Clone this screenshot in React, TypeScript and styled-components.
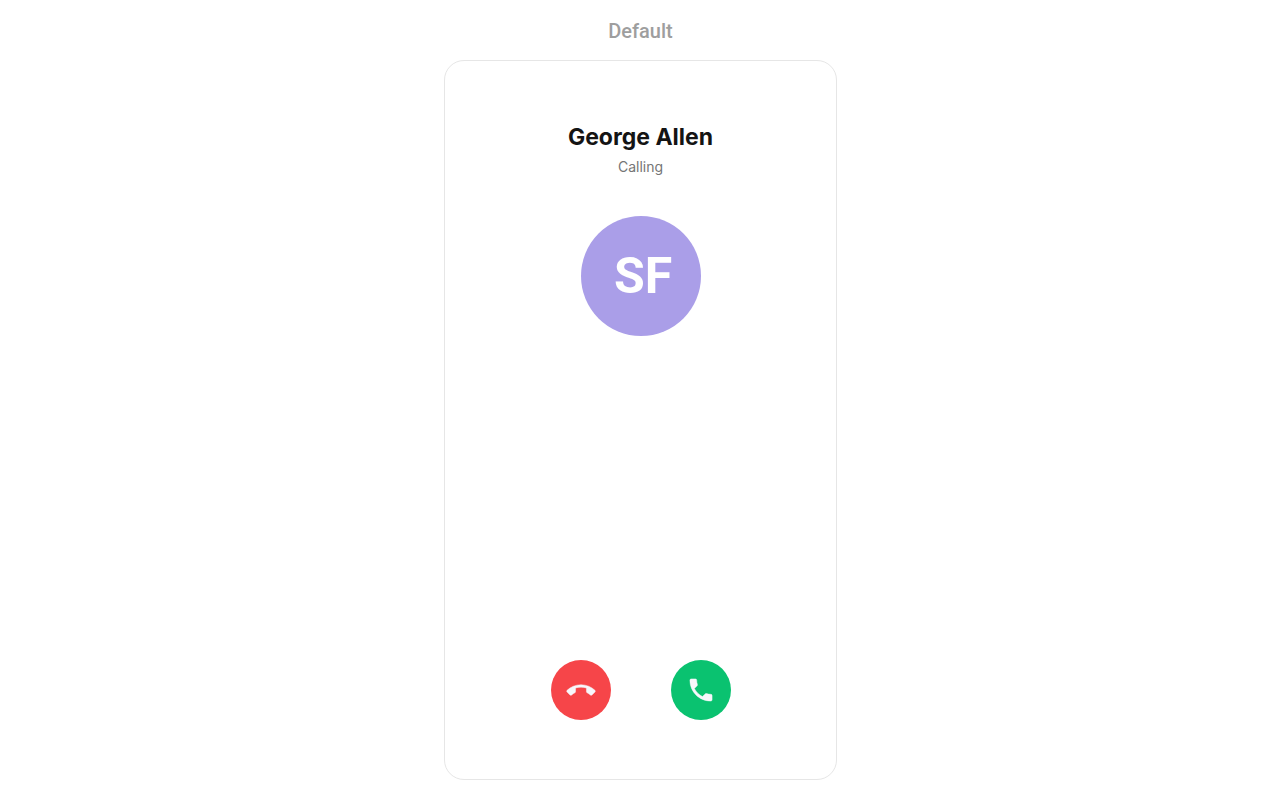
import React from "react";
import styled, { createGlobalStyle } from "styled-components";

const GlobalStyle = createGlobalStyle`
  * { box-sizing: border-box; }
  body { margin: 0; background: #fff; font-family: Inter, sans-serif; }
`;

const Page = styled.main`
  min-height: 100vh;
  padding: 16px 19px 20px 20px;
  display: flex;
  flex-direction: column;
  align-items: center;
  gap: 14px;
`;

const Caption = styled.p`
  margin: 0;
  font: 500 20px/30px Roboto, sans-serif;
  color: #9e9e9e;
`;

const Card = styled.section`
  flex: 1;
  width: 100%;
  max-width: 393px;
  padding: 60px 24px 59px;
  display: flex;
  flex-direction: column;
  align-items: center;
  border: 1px solid #e6e6e6;
  border-radius: 20px;
  background: #fff;
`;

const Name = styled.h1`
  margin: 0;
  font-size: 23px;
  line-height: 32px;
  font-weight: 700;
  color: #141414;
`;

const Status = styled.p`
  margin: 4px 0 0;
  font-size: 14px;
  line-height: 20px;
  color: #757575;
`;

const Avatar = styled.div`
  width: 120px;
  height: 120px;
  margin-top: 39px;
  padding-left: 5px;
  display: flex;
  align-items: center;
  justify-content: center;
  border-radius: 50%;
  background: #aa9ee8;
  color: #fff;
  font: 700 50px/60px Roboto, sans-serif;
`;

const Actions = styled.div`
  margin-top: auto;
  display: flex;
  gap: 60px;
`;

const CallButton = styled.button<{ $color: string }>`
  width: 60px;
  height: 60px;
  padding: 0;
  display: flex;
  align-items: center;
  justify-content: center;
  border: 0;
  border-radius: 50%;
  background: ${(p) => p.$color};
  color: #f7f7fb;
  cursor: pointer;
`;

const Icon = styled.svg`
  width: 30px;
  height: 30px;
  fill: currentColor;
  stroke: currentColor;
  stroke-width: 0.4px;
  stroke-linejoin: round;
`;

const DeclineIcon = () => (
  <Icon viewBox="-0.6 -1.2 25.2 25.2" aria-hidden="true">
    <path d="M12 9c-1.6 0-3.15.25-4.6.72v3.1c0 .39-.23.74-.56.9-.98.49-1.87 1.12-2.66 1.85-.18.18-.43.28-.7.28-.28 0-.53-.11-.71-.29L.29 13.08c-.18-.17-.29-.42-.29-.7 0-.28.11-.53.29-.71C3.34 8.78 7.46 7 12 7s8.66 1.78 11.71 4.67c.18.18.29.43.29.71 0 .28-.11.53-.29.71l-2.48 2.48c-.18.18-.43.29-.71.29-.27 0-.52-.11-.7-.28-.79-.74-1.69-1.36-2.67-1.85-.33-.16-.56-.5-.56-.9v-3.1C15.15 9.25 13.6 9 12 9z" />
  </Icon>
);

const AcceptIcon = () => (
  <Icon viewBox="-0.2 -0.2 24.4 24.4" aria-hidden="true">
    <path d="M6.62 10.79c1.44 2.83 3.76 5.14 6.59 6.59l2.2-2.2c.27-.27.67-.36 1.02-.24 1.12.37 2.33.57 3.57.57.55 0 1 .45 1 1V20c0 .55-.45 1-1 1-9.39 0-17-7.61-17-17 0-.55.45-1 1-1h3.5c.55 0 1 .45 1 1 0 1.25.2 2.45.57 3.57.11.35.03.74-.25 1.02l-2.2 2.2z" />
  </Icon>
);

export default function App() {
  return (
    <>
      <GlobalStyle />
      <Page>
        <Caption>Default</Caption>
        <Card>
          <Name>George Allen</Name>
          <Status>Calling</Status>
          <Avatar>SF</Avatar>
          <Actions>
            <CallButton type="button" aria-label="Decline" $color="#f64549">
              <DeclineIcon />
            </CallButton>
            <CallButton type="button" aria-label="Accept" $color="#0ac270">
              <AcceptIcon />
            </CallButton>
          </Actions>
        </Card>
      </Page>
    </>
  );
}
